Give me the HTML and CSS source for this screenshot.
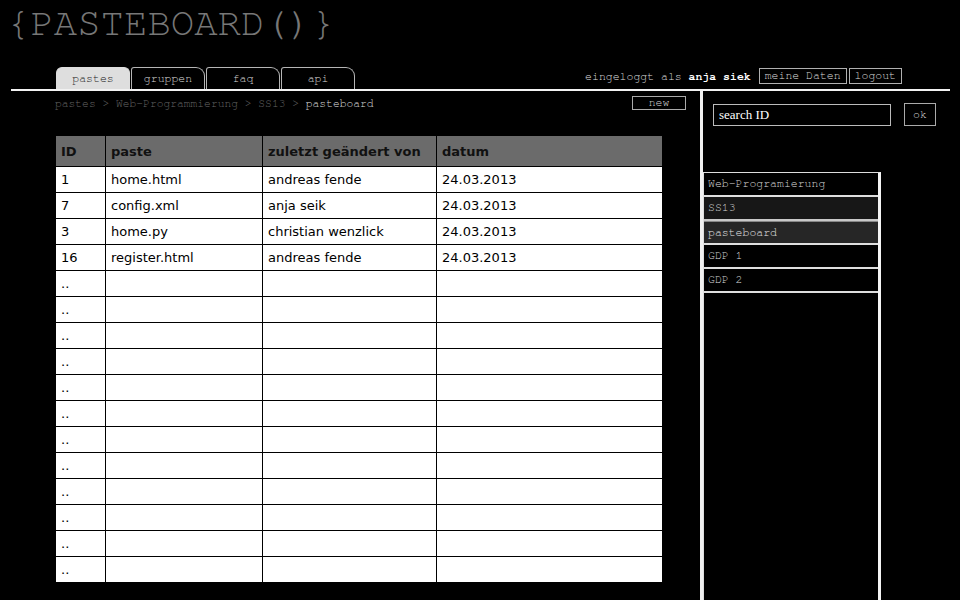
FILE: index.html
```html
<!DOCTYPE html>
<html>
<head>
<meta charset="utf-8">
<link rel="stylesheet" href="styles.css">
</head>
<body>
<div class="page">
  <header class="top">
    <div class="logo">{PASTEBOARD()}</div>
    <div class="navrow">
      <nav class="tabs">
        <a class="tab active">pastes</a>
        <a class="tab">gruppen</a>
        <a class="tab">faq</a>
        <a class="tab">api</a>
      </nav>
      <div class="user">
        <span class="login">eingeloggt als <b>anja siek</b></span>
        <span class="ubtn">meine Daten</span>
        <span class="ubtn">logout</span>
      </div>
    </div>
  </header>
  <div class="main">
    <section class="content">
      <div class="crumbrow">
        <div class="crumbs">pastes &gt; Web-Programmierung &gt; SS13 &gt; <span class="cur">pasteboard</span></div>
        <span class="newbtn">new</span>
      </div>
      <table class="grid">
        <colgroup><col class="c1"><col class="c2"><col class="c3"><col class="c4"></colgroup>
        <thead>
          <tr><th>ID</th><th>paste</th><th>zuletzt geändert von</th><th>datum</th></tr>
        </thead>
        <tbody>
          <tr><td>1</td><td>home.html</td><td>andreas fende</td><td>24.03.2013</td></tr>
          <tr><td>7</td><td>config.xml</td><td>anja seik</td><td>24.03.2013</td></tr>
          <tr><td>3</td><td>home.py</td><td>christian wenzlick</td><td>24.03.2013</td></tr>
          <tr><td>16</td><td>register.html</td><td>andreas fende</td><td>24.03.2013</td></tr>
          <tr><td>..</td><td></td><td></td><td></td></tr>
          <tr><td>..</td><td></td><td></td><td></td></tr>
          <tr><td>..</td><td></td><td></td><td></td></tr>
          <tr><td>..</td><td></td><td></td><td></td></tr>
          <tr><td>..</td><td></td><td></td><td></td></tr>
          <tr><td>..</td><td></td><td></td><td></td></tr>
          <tr><td>..</td><td></td><td></td><td></td></tr>
          <tr><td>..</td><td></td><td></td><td></td></tr>
          <tr><td>..</td><td></td><td></td><td></td></tr>
          <tr><td>..</td><td></td><td></td><td></td></tr>
          <tr><td>..</td><td></td><td></td><td></td></tr>
          <tr><td>..</td><td></td><td></td><td></td></tr>
        </tbody>
      </table>
    </section>
    <aside class="side">
      <div class="search">
        <div class="sinput">search ID</div>
        <span class="okbtn">ok</span>
      </div>
      <ul class="groups">
        <li class="g">Web-Programierung</li>
        <li class="g dark">SS13</li>
        <li class="g sel">pasteboard</li>
        <li class="g">GDP 1</li>
        <li class="g">GDP 2</li>
        <li class="g rest"></li>
      </ul>
    </aside>
  </div>
</div>
</body>
</html>
```
FILE: styles.css
```css
html, body {
  margin: 0;
  padding: 0;
  background: #000;
}
.page {
  width: 960px;
  height: 600px;
  overflow: hidden;
  display: flex;
  flex-direction: column;
  font-family: "Nimbus Mono PS", "FreeMono", "Courier", "Liberation Mono", monospace;
  font-size: 11.5px;
  color: #d4d4d4;
}
.logo {
  font-family: "Nimbus Mono PS", "FreeMono", "Courier", "Liberation Mono", monospace;
  font-size: 39px;
  line-height: 44px;
  height: 44px;
  color: #777;
  padding: 2px 0 0 7px;
}
.navrow {
  margin: 21px 10px 0 11px;
  padding: 0 48px 0 45px;
  border-bottom: 2px solid #f2f2f2;
  display: flex;
  justify-content: space-between;
  align-items: flex-end;
  height: 22px;
}
.tabs {
  display: flex;
  gap: 1px;
}
.tab {
  width: 72px;
  height: 21px;
  line-height: 22px;
  text-align: center;
  border: 1px solid #b5b5b5;
  border-bottom: none;
  border-radius: 3px 9px 0 0;
  color: #d8d8d8;
}
.tab.active {
  background: #dedede;
  border-color: #dedede;
  color: #222;
  border-radius: 6px 6px 0 0;
}
.user {
  display: flex;
  align-items: center;
  gap: 2px;
  margin-bottom: 5px;
}
.login {
  margin-right: 6px;
  color: #dedede;
}
.login b {
  color: #fff;
}
.ubtn {
  border: 1px solid #b0b0b0;
  padding: 0 5px;
  height: 14px;
  line-height: 14px;
  color: #dadada;
}
.main {
  flex: 1;
  display: flex;
}
.content {
  width: 700px;
  flex: none;
}
.crumbrow {
  display: flex;
  justify-content: space-between;
  align-items: flex-start;
  padding: 5px 14px 0 55px;
  height: 40px;
}
.crumbs {
  color: #666;
  font-size: 11.3px;
  line-height: 14px;
  padding-top: 1px;
}
.crumbs .cur {
  color: #dedede;
}
.newbtn {
  width: 52px;
  height: 12px;
  line-height: 11px;
  border: 1px solid #aaa;
  text-align: center;
  color: #d4d4d4;
}
.grid {
  margin-left: 55px;
  width: 607px;
  border-collapse: collapse;
  table-layout: fixed;
  font-family: "DejaVu Sans", sans-serif;
  font-size: 13px;
  color: #000;
}
.c1 { width: 50px; }
.c2 { width: 157px; }
.c3 { width: 174px; }
.c4 { width: 226px; }
.grid th, .grid td {
  border: 1px solid #000;
  text-align: left;
  padding: 0 0 0 5px;
  overflow: hidden;
  white-space: nowrap;
}
.grid th {
  background: #6b6b6b;
  height: 30px;
  font-weight: bold;
  color: #111;
  border-top: none;
}
.grid td {
  background: #fff;
  height: 25px;
  padding-top: 0;
}
.side {
  flex: 1;
  border-left: 3px solid #f0f0f0;
  display: flex;
  flex-direction: column;
}
.search {
  display: flex;
  align-items: flex-start;
  gap: 13px;
  padding: 12px 0 0 10px;
  height: 69px;
}
.sinput {
  margin-top: 1px;
  width: 171px;
  height: 20px;
  padding-left: 5px;
  border: 1px solid #bbb;
  font-family: "Liberation Serif", serif;
  font-size: 13px;
  line-height: 20px;
  color: #fff;
}
.okbtn {
  width: 30px;
  height: 21px;
  line-height: 21px;
  text-align: center;
  border: 1px solid #aaa;
  color: #d4d4d4;
}
.groups {
  list-style: none;
  margin: 0;
  padding: 0;
  flex: 1;
  width: 174px;
  border-left: 1px solid #ddd;
  border-right: 3px solid #f4f4f4;
  border-top: 1px solid #ddd;
}
.g {
  height: 22px;
  line-height: 22px;
  padding-left: 4px;
  border-bottom: 2px solid #dedede;
  color: #d8d8d8;
}
.g.dark {
  background: #171717;
  border-bottom: 2px solid #c8c8c8;
}
.g.sel {
  background: #262626;
  height: 21px;
  border-top: 1px solid #888;
  color: #e4e4e4;
}
.g.rest {
  border-bottom: none;
  height: 320px;
}
```
